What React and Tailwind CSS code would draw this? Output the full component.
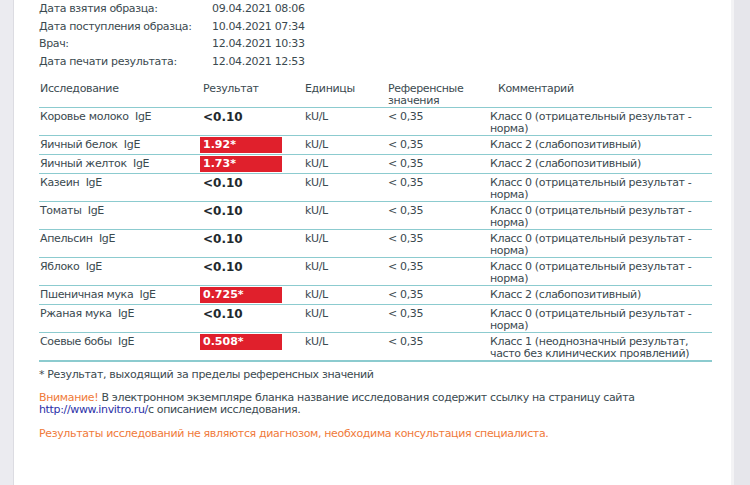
import React from "react";

const info = [
  ["Дата взятия образца:", "09.04.2021 08:06"],
  ["Дата поступления образца:", "10.04.2021 07:34"],
  ["Врач:", "12.04.2021 10:33"],
  ["Дата печати результата:", "12.04.2021 12:53"],
];

const norm = "Класс 0 (отрицательный результат - норма)";
const weak = "Класс 2 (слабопозитивный)";

const rows = [
  { name: "Коровье молоко  IgE", value: "<0.10", comment: norm },
  { name: "Яичный белок  IgE", value: "1.92*", high: true, comment: weak },
  { name: "Яичный желток  IgE", value: "1.73*", high: true, comment: weak },
  { name: "Казеин  IgE", value: "<0.10", comment: norm },
  { name: "Томаты  IgE", value: "<0.10", comment: norm },
  { name: "Апельсин  IgE", value: "<0.10", comment: norm },
  { name: "Яблоко  IgE", value: "<0.10", comment: norm },
  { name: "Пшеничная мука  IgE", value: "0.725*", high: true, comment: weak },
  { name: "Ржаная мука  IgE", value: "<0.10", comment: norm },
  { name: "Соевые бобы  IgE", value: "0.508*", high: true, comment: "Класс 1 (неоднозначный результат, часто без клинических проявлений)" },
];

export default function App() {
  return (
    <div className="flex w-[750px] h-[485px] overflow-hidden bg-[#e8e8ed] text-[#3b4a50] font-['DejaVu_Sans',Verdana,sans-serif] text-[11px] tracking-[-0.35px]">
      <div className="w-[14px] shrink-0 border-r border-[#dcdce2] bg-[#ebebf0]" />
      <div className="flex-1 bg-white pl-[25px] pr-[18px] border-r-[3px] border-[#f3f3f5]">
        {/* шапка */}
        <div className="leading-[17.5px]">
          {info.map(([k, v]) => (
            <div key={k} className="flex">
              <span className="w-[173px]">{k}</span>
              <span>{v}</span>
            </div>
          ))}
        </div>

        <table className="mt-[11px] w-[673px] border-collapse table-fixed leading-[12px]">
          <colgroup>
            <col className="w-[161px]" />
            <col className="w-[102px]" />
            <col className="w-[83px]" />
            <col className="w-[102px]" />
            <col />
          </colgroup>
          <thead>
            <tr className="border-b border-[#8ccbcf] align-top text-left">
              <th className="font-normal pl-[1px] pt-[2px] pb-[3px]">Исследование</th>
              <th className="font-normal pl-[3px] pt-[2px]">Результат</th>
              <th className="font-normal pl-[3px] pt-[2px]">Единицы</th>
              <th className="font-normal pl-[3px] pt-[2px]">Референсные<br />значения</th>
              <th className="font-normal pl-[11px] pt-[2px]">Комментарий</th>
            </tr>
          </thead>
          <tbody>
            {rows.map((r, i) => (
              <tr
                key={r.name}
                className={`align-top ${i === rows.length - 1 ? "border-b-2" : "border-b"} border-[#8ccbcf]`}
              >
                <td className="pl-[1px] pt-[3px] whitespace-pre">{r.name}</td>
                <td className="py-[1px]">
                  {r.high ? (
                    <div className="w-[82px] bg-[#e0202c] text-white font-bold pl-[3px] pt-[2px] pb-[2px] tracking-normal">{r.value}</div>
                  ) : (
                    <div className="font-bold text-[#1f2a2e] pl-[3px] pt-[2px] text-[12px] tracking-normal">{r.value}</div>
                  )}
                </td>
                <td className="pl-[3px] pt-[3px]">kU/L</td>
                <td className="pl-[3px] pt-[3px]">&lt; 0,35</td>
                <td className="pl-[3px] pt-[3px] pr-[4px]">{r.comment}</td>
              </tr>
            ))}
          </tbody>
        </table>

        <p className="mt-[6px] leading-[14px]">* Результат, выходящий за пределы референсных значений</p>
        <p className="mt-[10px] leading-[12px]">
          <span className="text-[#f07a3a]">Внимание!</span> В электронном экземпляре бланка название исследования содержит ссылку на страницу сайта
          <br />
          <span className="text-[#2b2fa8]">http://www.invitro.ru/</span>с описанием исследования.
        </p>
        <p className="mt-[10px] text-[#f07a3a]">Результаты исследований не являются диагнозом, необходима консультация специалиста.</p>
      </div>
      <div className="w-[16px] shrink-0 bg-[#e6e6eb]" />
    </div>
  );
}
